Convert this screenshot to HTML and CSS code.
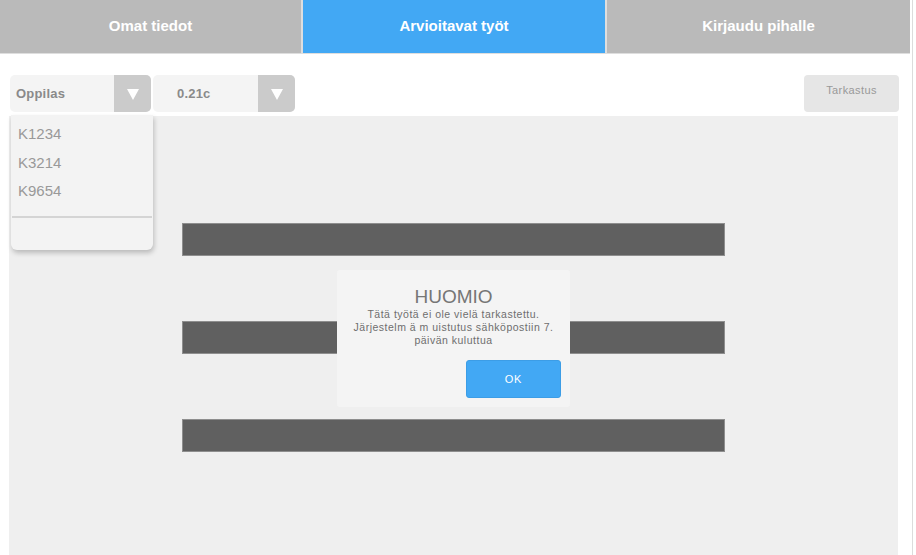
FILE: index.html
```html
<!DOCTYPE html>
<html lang="fi">
<head>
<meta charset="utf-8">
<title>Arvioitavat työt</title>
<link rel="stylesheet" href="styles.css">
</head>
<body>
<div class="page">
  <nav class="tabs">
    <div class="tab">Omat tiedot</div>
    <div class="tab active">Arvioitavat työt</div>
    <div class="tab">Kirjaudu pihalle</div>
  </nav>
  <div class="toolbar">
    <div class="select">
      <span class="select-label">Oppilas</span>
      <span class="select-arrow"><svg width="12" height="12" viewBox="0 0 12 12"><polygon points="0,1 12,1 6,12" fill="#fff"/></svg></span>
    </div>
    <div class="select select-2">
      <span class="select-label">0.21c</span>
      <span class="select-arrow"><svg width="12" height="12" viewBox="0 0 12 12"><polygon points="0,1 12,1 6,12" fill="#fff"/></svg></span>
    </div>
    <div class="spacer"></div>
    <div class="check-btn">Tarkastus</div>
  </div>
  <main class="main">
    <div class="bars">
      <div class="bar"></div>
      <div class="bar"></div>
      <div class="bar"></div>
    </div>
    <ul class="menu">
      <li>K1234</li>
      <li>K3214</li>
      <li>K9654</li>
      <li class="divider"></li>
    </ul>
    <div class="dialog">
      <h2 class="dialog-title">HUOMIO</h2>
      <p class="dialog-text">Tätä työtä ei ole vielä tarkastettu. Järjestelm ä m uistutus sähköpostiin 7. päivän kuluttua</p>
      <div class="dialog-actions"><button class="ok-btn">OK</button></div>
    </div>
  </main>
</div>
</body>
</html>
```
FILE: styles.css
```css
* { box-sizing: border-box; }
html, body { margin: 0; padding: 0; background: #fff; }
body { font-family: "Liberation Sans", Arial, sans-serif; }
.page {
  width: 913px;
  height: 555px;
  overflow: hidden;
  border-right: 1px solid #dcdcdc;
  padding-right: 2px;
}
.tabs {
  display: grid;
  grid-template-columns: 301px 302px 1fr;
  column-gap: 2px;
  background: #dedede;
  height: 54px;
  padding-bottom: 1px;
}
.tab {
  background: #bababa;
  color: #fff;
  font-weight: bold;
  font-size: 15px;
  text-align: center;
  line-height: 51px;
  height: 53px;
}
.tab.active { background: #42a8f4; }
.toolbar {
  display: flex;
  align-items: flex-start;
  padding: 21px 0 0 10px;
  width: 899px;
  height: 62px;
}
.select {
  display: flex;
  width: 141px;
  height: 37px;
  background: #f4f4f4;
  border-radius: 5px;
  overflow: hidden;
}
.select-2 { margin-left: 2px; width: 142px; }
.select-label {
  flex: 1;
  font-size: 13px;
  font-weight: bold;
  color: #8a8a8a;
  line-height: 38px;
  padding-left: 6px;
  letter-spacing: 0.2px;
}
.select-2 .select-label { padding-left: 24px; }
.select-arrow {
  width: 37px;
  background: #cbcbcb;
  display: flex;
  align-items: center;
  justify-content: center;
}
.spacer { flex: 1; }
.check-btn {
  width: 95px;
  height: 37px;
  background: #e6e6e6;
  border-radius: 4px;
  font-size: 11px;
  color: #999;
  letter-spacing: 0.4px;
  text-align: center;
  padding-top: 9px;
}
.main {
  position: relative;
  margin: 0 0 0 9px;
  width: 889px;
  height: 440px;
  background: #efefef;
}
.bars {
  display: flex;
  flex-direction: column;
  gap: 65px;
  padding: 107px 0 0 173px;
}
.bar {
  width: 543px;
  height: 33px;
  background: #606060;
  border: 1px solid #8e8e8e;
}
.menu {
  position: absolute;
  left: 2px;
  top: -1px;
  width: 142px;
  height: 135px;
  margin: 0;
  padding: 9px 0 0 0;
  list-style: none;
  background: #f3f3f3;
  border-radius: 0 0 6px 6px;
  box-shadow: 1px 3px 5px rgba(0, 0, 0, 0.22);
}
.menu li {
  font-size: 15px;
  color: #999;
  height: 28.5px;
  line-height: 19px;
  padding-left: 7px;
}
.menu li.divider {
  height: 2px;
  margin: 6px 1px 0 1px;
  background: #d4d4d4;
}
.dialog {
  position: absolute;
  left: 328px;
  top: 154px;
  width: 233px;
  height: 137px;
  background: #f4f4f4;
  border-radius: 3px;
  text-align: center;
  padding-top: 16px;
}
.dialog-title {
  margin: 0;
  font-size: 19px;
  font-weight: normal;
  color: #767676;
  line-height: 22px;
}
.dialog-text {
  margin: 0;
  padding: 0 14px;
  font-size: 10.5px;
  letter-spacing: 0.5px;
  line-height: 13px;
  color: #6e6e6e;
}
.dialog-actions {
  display: flex;
  justify-content: flex-end;
  padding: 13px 9px 0 0;
}
.ok-btn {
  width: 95px;
  height: 38px;
  border: 1px solid #3c9de6;
  border-radius: 3px;
  background: #42a8f4;
  color: #fff;
  font-family: "Liberation Sans", Arial, sans-serif;
  font-size: 11px;
  letter-spacing: 0.8px;
  padding: 0;
}
```
